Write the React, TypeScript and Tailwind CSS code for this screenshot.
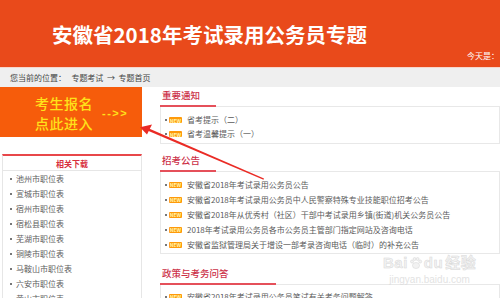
import React from "react";

const F = '"Noto Sans CJK SC", "Noto Sans", sans-serif';

function Badge() {
  return (
    <span className="inline-flex items-center justify-center w-[13px] h-[6px] bg-[#ff9a0a] rounded-[1px] mr-[5px] shrink-0">
      <span className="text-[5px] leading-[5px] text-[#fff6b0] font-bold">NEW</span>
    </span>
  );
}

function Item({ text, h }: { text: string; h: string }) {
  return (
    <div className={`flex items-center ${h} whitespace-nowrap`}>
      <span className="w-[2px] h-[2px] bg-[#777] mr-[2px] shrink-0" />
      <Badge />
      <span className="text-[8px] text-[#5a5a5a]">{text}</span>
    </div>
  );
}

function Heading({ title, bar }: { title: string; bar: string }) {
  return (
    <div>
      <div className="h-[14px] leading-[14px] pl-[2px] text-[9.5px] font-medium text-[#cc3148] whitespace-nowrap" style={{ fontFamily: '"Liberation Serif", "Noto Sans CJK SC", serif' }}>{title}</div>
      <div className="flex items-center h-[2px] mt-[2px]">
        <div className={`${bar} h-[2px] bg-[#e5505a] shrink-0`} />
        <div className="flex-1 h-px bg-[#e8e8e8]" />
      </div>
    </div>
  );
}

export default function App() {
  const s1 = ["省考提示（二）", "省考温馨提示（一）"];
  const s2 = [
    "安徽省2018年考试录用公务员公告",
    "安徽省2018年考试录用公务员中人民警察特殊专业技能职位招考公告",
    "安徽省2018年从优秀村（社区）干部中考试录用乡镇(街道)机关公务员公告",
    "2018年考试录用公务员各市公务员主管部门指定网站及咨询电话",
    "安徽省监狱管理局关于增设一部考录咨询电话（临时）的补充公告",
  ];
  const left = [
    "池州市职位表",
    "宣城市职位表",
    "宿州市职位表",
    "宿松县职位表",
    "芜湖市职位表",
    "铜陵市职位表",
    "马鞍山市职位表",
    "六安市职位表",
    "黄山市职位表",
  ];
  return (
    <div className="relative w-[500px] h-[298px] overflow-hidden bg-white" style={{ fontFamily: F }}>
      <div className="h-[67px] bg-[#e94a1b] flex flex-col pt-[22px] pl-[52px]">
        <div className="text-[20.5px] leading-[24px] font-bold text-white whitespace-nowrap">安徽省2018年考试录用公务员专题</div>
        <div className="self-end mt-[5px] text-[8px] leading-[10px] text-white whitespace-nowrap w-[33px]">今天是：</div>
      </div>
      <div className="h-px bg-[#f7d6cc]" />
      <div className="h-[19px] bg-[#efefef] pl-[10px] text-[8px] leading-[19px] text-[#444] whitespace-nowrap">
        您当前的位置：&nbsp;&nbsp;&nbsp;专题考试 &nbsp;→&nbsp; 专题首页
      </div>
      <div className="flex">
        <div className="w-[142px] shrink-0">
          <div className="h-[50px] bg-[#f65c0b] flex items-start pt-[6px] pl-[35px]">
            <div className="flex flex-col text-[14px] leading-[20px] font-medium text-[#ffe21a] tracking-[0.5px]">
              <span>考生报名</span>
              <span>点此进入</span>
            </div>
            <div className="ml-[9px] mt-[13px] text-[11px] leading-[14px] font-bold text-[#ffe21a] tracking-[1.5px]" style={{ fontFamily: '"Liberation Sans", sans-serif' }}>--&gt;&gt;</div>
          </div>
          <div className="mt-[17px] ml-[2px] border-t-2 border-[#e8474a] border-x border-x-[#e6e6e6]">
            <div className="h-[15px] leading-[15px] text-center text-[8px] font-bold text-[#d8303e] border-b border-[#e6e6e6]">相关下载</div>
            <div className="pl-[7px]">
              {left.map((t) => (
                <div key={t} className="flex items-center h-[15px] whitespace-nowrap">
                  <span className="w-[2px] h-[2px] bg-[#777] mr-[4px]" />
                  <span className="text-[8px] text-[#606060]">{t}</span>
                </div>
              ))}
            </div>
          </div>
        </div>
        <div className="flex-1 pl-[18px] min-w-0">
          <div className="mt-[2px]">
            <Heading title="重要通知" bar="w-[56px]" />
            <div className="border-x border-b border-[#e8e8e8] pl-[4px] pt-[6px] pb-[2px]">
              {s1.map((t) => (
                <Item key={t} text={t} h="h-[14px]" />
              ))}
            </div>
          </div>
          <div className="mt-[10px]">
            <Heading title="招考公告" bar="w-[56px]" />
            <div className="border-x border-b border-[#e8e8e8] pl-[4px] pt-[5px] pb-[1px]">
              {s2.map((t) => (
                <Item key={t} text={t} h="h-[15px]" />
              ))}
            </div>
          </div>
          <div className="mt-[13px]">
            <Heading title="政策与考务问答" bar="w-[116px]" />
            <div className="border-x border-[#e8e8e8] pl-[4px] pt-[4px]">
              <Item text="安徽省2018年考试录用公务员笔试有关考务问题解答" h="h-[15px]" />
            </div>
          </div>
        </div>
      </div>
      <svg className="absolute left-0 top-0 pointer-events-none" width="500" height="298">
        <polygon points="149,128.5 264,178.5 263.5,179.8 148,130.8" fill="#ea2b25" />
        <polygon points="140,127.2 152,124.5 149.5,129.5 147,134.5" fill="#ea2b25" />
      </svg>
      <div className="absolute left-[383px] top-[254px] flex flex-col items-center pointer-events-none opacity-80">
        <div className="flex items-center text-[15px] leading-[18px] font-bold text-[#f0f0f0] tracking-[0.5px]" style={{ fontFamily: '"Liberation Sans", "Noto Sans CJK SC", sans-serif', WebkitTextStroke: "0.5px #d0d0d0" }}>
          <span>Bai</span>
          <svg width="14" height="14" viewBox="0 0 14 14" className="mx-[1px]">
            <ellipse cx="7" cy="9.5" rx="3.5" ry="3" fill="#f0f0f0" stroke="#d0d0d0" strokeWidth="0.6" />
            <circle cx="3" cy="5.5" r="1.5" fill="#f0f0f0" stroke="#d0d0d0" strokeWidth="0.6" />
            <circle cx="5.6" cy="3" r="1.5" fill="#f0f0f0" stroke="#d0d0d0" strokeWidth="0.6" />
            <circle cx="8.6" cy="3" r="1.5" fill="#f0f0f0" stroke="#d0d0d0" strokeWidth="0.6" />
            <circle cx="11.2" cy="5.5" r="1.5" fill="#f0f0f0" stroke="#d0d0d0" strokeWidth="0.6" />
          </svg>
          <span>du</span>
          <span className="ml-[2px]">经验</span>
        </div>
        <div className="text-[10px] leading-[12px] text-[#dcdcdc] mt-[2px]" style={{ fontFamily: '"Liberation Sans", sans-serif' }}>jingyan.baidu.com</div>
      </div>
    </div>
  );
}
